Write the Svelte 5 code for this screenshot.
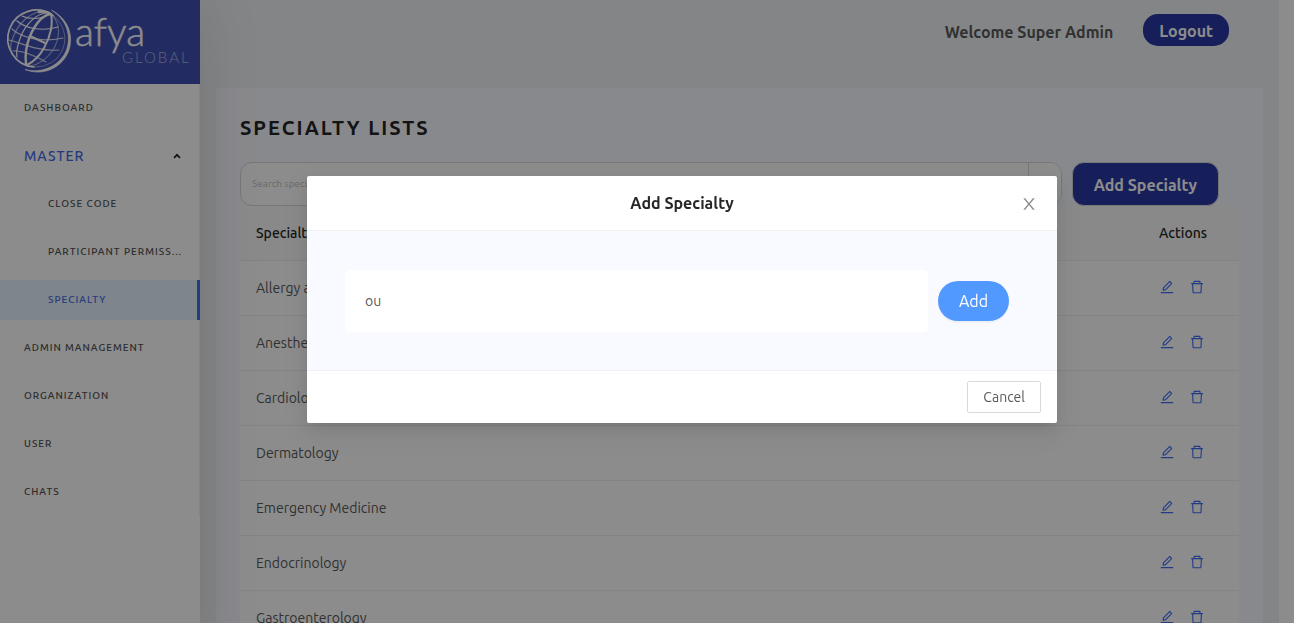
<script>
  const topItems = ['Admin Management', 'Organization', 'User', 'Chats'];
  const subItems = ['Close Code', 'Participant Permissions', 'Specialty'];
  const specialties = [
    'Allergy and Immunology',
    'Anesthesiology',
    'Cardiology',
    'Dermatology',
    'Emergency Medicine',
    'Endocrinology',
    'Gastroenterology'
  ];
  let selected = $state('Specialty');
  let search = $state('');
  let name = $state('ou');
</script>

<div class="layout">
  <aside class="sider">
    <div class="brand">
      <svg viewBox="0 0 200 84" width="200" height="84" role="img" aria-label="afya global">
        <g fill="none" stroke="#fff" stroke-linecap="round" transform="translate(1 0)">
          <path d="M52 15.500A28.500 28.500 0 1 0 33 67" stroke-width="1.700" />
          <path d="M52 15.500A28.500 28.500 0 0 1 33 67" stroke-width="1" stroke-opacity=".45" />
          <path d="M51 10.500C66 18 73 34 68 50C62 67 43 77 24 69.500C41 74 59 66 65.500 50C70.500 36 66 20 51 10.500Z" fill="#fff" stroke-width="0.700" />
          <g stroke-width="1.200">
            <path d="M38 12C42 11 47 12 50 14.500" stroke-width="2.600" />
            <path d="M49 14C40 16 33 27 29 36C25 46 24 56 25 64" stroke-width="2.400" />
            <path d="M50 14C52 23 50 36 43 48C38 57 32 62 26 65" stroke-width="2" />
            <path d="M45 13C34 14 24 26 20 36C16 46 15 53 16 57" />
            <path d="M38 12C27 14 17 25 13 35C10 42 9 46 10 49" stroke-opacity=".6" />
            <path d="M51 15C60 24 59 38 52 50C46 59 37 65 29 66" stroke-opacity=".5" />
            <path d="M21 16C27 19 38 20 47 15" />
            <path d="M16 21C24 28 40 32 57 27" />
            <path d="M11 29C20 37 38 43 62 38" stroke-opacity=".8" />
            <path d="M29 36L44 43" stroke-width="2" />
            <path d="M8 40C18 42 37 52 58 50" stroke-opacity=".8" />
            <path d="M12 51C22 50 36 57 45 62" stroke-opacity=".7" />
          </g>
        </g>
        <text class="word" x="75" y="46">afya</text>
        <text class="subword" x="122" y="63">GLOBAL</text>
      </svg>
    </div>
    <nav class="menu">
      <a href="#dashboard" class="item">Dashboard</a>
      <button type="button" class="item group">
        <span>Master</span>
        <svg width="8" height="6" viewBox="0 0 8 6" aria-hidden="true">
          <path d="M1 4.800L4 1.800L7 4.800" fill="none" stroke="#222" stroke-width="1.700" />
        </svg>
      </button>
      {#each subItems as item}
        <a
          href="#{item.toLowerCase().replace(' ', '-')}"
          class="item sub"
          class:selected={selected === item}
          onclick={() => (selected = item)}>{item}</a>
      {/each}
      {#each topItems as item}
        <a href="#{item.toLowerCase().replace(' ', '-')}" class="item">{item}</a>
      {/each}
    </nav>
  </aside>

  <div class="page">
    <header class="topbar">
      <span class="welcome">Welcome Super Admin</span>
      <button type="button" class="logout">Logout</button>
    </header>
    <main class="content">
      <h1>Specialty Lists</h1>
      <div class="tools">
        <div class="search">
          <input type="text" aria-label="Search specialty" placeholder="Search specialty" bind:value={search} />
          <button type="button" aria-label="Search"></button>
        </div>
        <button type="button" class="add-specialty">Add Specialty</button>
      </div>
      <table>
        <thead>
          <tr><th>Specialty</th><th class="actions">Actions</th></tr>
        </thead>
        <tbody>
          {#each specialties as row}
            <tr>
              <td>{row}</td>
              <td class="actions">
                <div class="icons">
                  <button type="button" aria-label="Edit {row}">
                    <svg viewBox="0 0 1024 1024" width="16" height="16"><path d="M257.7 752c2 0 4-.2 6-.5L431.9 722c2-.4 3.9-1.3 5.3-2.8l423.9-423.9a9.96 9.96 0 000-14.1L694.9 114.9c-1.9-1.9-4.4-2.9-7.1-2.9s-5.2 1-7.1 2.9L256.8 538.8c-1.5 1.5-2.4 3.3-2.8 5.3l-29.5 168.2a33.5 33.5 0 009.4 29.8c6.6 6.4 14.9 9.9 23.8 9.900zm67.4-174.4L687.8 215l73.3 73.3-362.7 362.6-88.9 15.7 15.6-89zM880 836H144c-17.7 0-32 14.3-32 32v36c0 4.400 3.600 8 8 8h784c4.400 0 8-3.600 8-8v-36c0-17.700-14.300-32-32-32z" /></svg>
                  </button>
                  <button type="button" aria-label="Delete {row}">
                    <svg viewBox="0 0 1024 1024" width="16" height="16"><path d="M360 184h-8c4.400 0 8-3.600 8-8v8h304v-8c0 4.400 3.600 8 8 8h-8v72h72v-80c0-35.300-28.700-64-64-64H352c-35.300 0-64 28.700-64 64v80h72v-72zm504 72H160c-17.700 0-32 14.300-32 32v32c0 4.400 3.600 8 8 8h60.400l24.700 523c1.600 34.100 29.800 61 63.900 61h454c34.200 0 62.300-26.800 63.900-61l24.700-523H888c4.400 0 8-3.600 8-8v-32c0-17.700-14.300-32-32-32zM731.300 840H292.700l-24.200-512h487l-24.200 512z" /></svg>
                  </button>
                </div>
              </td>
            </tr>
          {/each}
        </tbody>
      </table>
    </main>
  </div>
</div>

<div class="mask">
  <div class="modal" role="dialog" aria-modal="true" aria-labelledby="modal-title">
    <header class="modal-head">
      <h2 id="modal-title">Add Specialty</h2>
      <button type="button" class="close" aria-label="Close">
        <svg viewBox="0 0 1024 1024" width="18" height="18"><path d="M563.8 512l262.5-312.9c4.400-5.200.7-13.100-6.100-13.100h-79.800c-4.700 0-9.200 2.100-12.300 5.700L511.600 449.800 295.100 191.700c-3-3.600-7.500-5.700-12.300-5.700H203c-6.800 0-10.500 7.900-6.100 13.100L459.400 512 196.900 824.900A7.950 7.950 0 00203 838h79.800c4.700 0 9.200-2.100 12.300-5.700l216.500-258.100 216.500 258.100c3 3.600 7.500 5.700 12.300 5.700h79.800c6.800 0 10.500-7.900 6.100-13.100L563.800 512z" /></svg>
      </button>
    </header>
    <div class="modal-body">
      <input type="text" aria-label="Specialty name" bind:value={name} />
      <button type="button" class="add">Add</button>
    </div>
    <footer class="modal-foot">
      <button type="button" class="cancel">Cancel</button>
    </footer>
  </div>
</div>

<style>
  :global(body) {
    overflow: hidden;
    height: 100vh;
    padding-right: 15px;
    box-sizing: border-box;
    background: #fff;
    font-family: Ubuntu, 'Open Sans', 'Noto Sans', sans-serif;
    font-size: 14px;
    line-height: 22px;
    color: #595959;
  }
  * {
    box-sizing: border-box;
  }
  button,
  input {
    font: inherit;
    color: inherit;
    margin: 0;
  }
  button {
    cursor: pointer;
  }
  .layout {
    display: flex;
    min-height: 100vh;
    background: #f0f2f5;
  }
  .sider {
    position: relative;
    z-index: 1;
    flex: 0 0 200px;
    min-width: 0;
    background: #fff;
    box-shadow: 0 0 60px rgba(0, 0, 0, 0.12);
  }
  .brand {
    height: 84px;
    background: #3f51b5;
  }
  .brand svg {
    display: block;
  }
  .word,
  .subword {
    font-family: Lato, sans-serif;
    font-weight: 300;
    fill: #fff;
  }
  .word {
    font-size: 39px;
    stroke: #fff;
    stroke-width: 0.5px;
  }
  .subword {
    font-size: 15px;
    letter-spacing: 2px;
    fill: #a8b1de;
  }
  .menu {
    display: flex;
    flex-direction: column;
    gap: 8px;
    padding: 4px 0;
    border-right: 1px solid #f0f0f0;
  }
  .item {
    display: block;
    padding: 0 16px 0 24px;
    overflow: hidden;
    border: 0;
    background: none;
    color: #505050;
    font-size: 10px;
    font-weight: 500;
    line-height: 40px;
    letter-spacing: 1px;
    text-align: left;
    text-decoration: none;
    text-overflow: ellipsis;
    text-transform: uppercase;
    white-space: nowrap;
  }
  .group {
    display: flex;
    align-items: center;
    justify-content: space-between;
    padding-right: 18px;
    color: #4569e8;
    font-size: 14px;
  }
  .sub {
    padding-left: 48px;
  }
  .selected {
    margin-right: -1px;
    border-right: 3px solid #416ef5;
    background: #e6f4ff;
    color: #4569e8;
  }
  .page {
    flex: 1;
    min-width: 0;
  }
  .topbar {
    display: flex;
    align-items: center;
    justify-content: flex-end;
    gap: 30px;
    height: 64px;
    padding-right: 50px;
    font-size: 16px;
    font-weight: 700;
  }
  .logout {
    height: 32px;
    margin-bottom: 4px;
    padding: 2px 16px 0;
    border: 0;
    border-radius: 15px;
    background: #2a39a4;
    color: #fff;
  }
  .content {
    margin: 24px 16px 0;
    padding: 24px;
    background: #f8f9ff;
  }
  h1 {
    margin: 0 0 18px;
    color: #262626;
    font-size: 20px;
    font-weight: 700;
    line-height: 32px;
    letter-spacing: 2px;
    text-transform: uppercase;
  }
  .tools {
    display: flex;
    align-items: center;
    gap: 10px;
    padding-right: 20px;
  }
  .search {
    display: flex;
    flex: 1;
    height: 44px;
    border: 1px solid #d9d9d9;
    border-radius: 12px;
    background: #fff;
    overflow: hidden;
  }
  .search input {
    flex: 1;
    min-width: 0;
    padding: 0 11px;
    border: 0;
    outline: 0;
    background: none;
    font-size: 10px;
  }
  .search input::placeholder {
    color: #bfbfbf;
  }
  .search button {
    width: 33px;
    border: 0;
    border-left: 1px solid #d9d9d9;
    background: #fff;
  }
  .add-specialty {
    height: 44px;
    padding: 2px 21px 0;
    border: 1px solid #d9d9d9;
    border-radius: 12px;
    background: #2a39a4;
    color: #fff;
    font-size: 16px;
    font-weight: 700;
  }
  table {
    width: 100%;
    border-collapse: separate;
    border-spacing: 0;
    background: #fff;
  }
  th,
  td {
    height: 55px;
    padding: 0 16px;
    border-bottom: 1px solid #f0f0f0;
    text-align: left;
  }
  th {
    background: #fafafa;
    color: #262626;
    font-weight: 500;
  }
  .actions {
    width: 96px;
  }
  .icons {
    display: flex;
    gap: 14px;
    padding-bottom: 2px;
  }
  .icons button {
    display: flex;
    padding: 0;
    border: 0;
    background: none;
  }
  .icons svg {
    fill: #416ef5;
  }
  .mask {
    position: fixed;
    inset: 0;
    z-index: 10;
    display: flex;
    align-items: flex-start;
    justify-content: center;
    padding: 176px 0 0 70px;
    background: rgba(0, 0, 0, 0.45);
  }
  .modal {
    width: 750px;
    max-width: 100%;
    border-radius: 2px;
    background: #fff;
    box-shadow:
      0 3px 6px -4px rgba(0, 0, 0, 0.12),
      0 6px 16px rgba(0, 0, 0, 0.08),
      0 9px 28px 8px rgba(0, 0, 0, 0.05);
  }
  .modal-head {
    position: relative;
    padding: 16px 24px;
    border-bottom: 1px solid #f0f0f0;
  }
  h2 {
    margin: 0;
    color: #262626;
    font-size: 16px;
    font-weight: 700;
    line-height: 22px;
    text-align: center;
  }
  .close {
    position: absolute;
    top: 0;
    right: 0;
    display: flex;
    align-items: center;
    justify-content: center;
    width: 56px;
    height: 55px;
    padding: 0;
    border: 0;
    background: none;
  }
  .close svg {
    fill: #8c8c8c;
  }
  .modal-body {
    display: flex;
    align-items: center;
    gap: 10px;
    padding: 39px 48px 38px 38px;
    background: #f8faff;
  }
  .modal-body input {
    flex: 1;
    min-width: 0;
    height: 62px;
    padding: 0 20px;
    border: 0;
    border-radius: 5px;
    outline: 0;
    background: #fff;
  }
  .add {
    height: 40px;
    padding: 0 21px;
    border: 0;
    border-radius: 20px;
    background: #5199ff;
    box-shadow: 0 2px 0 rgba(0, 0, 0, 0.04);
    color: #fff;
    font-size: 16px;
  }
  .modal-foot {
    display: flex;
    justify-content: flex-end;
    padding: 10px 16px;
    border-top: 1px solid #f0f0f0;
  }
  .cancel {
    height: 32px;
    padding: 0 15px;
    border: 1px solid #d9d9d9;
    border-radius: 2px;
    background: #fff;
  }
</style>
